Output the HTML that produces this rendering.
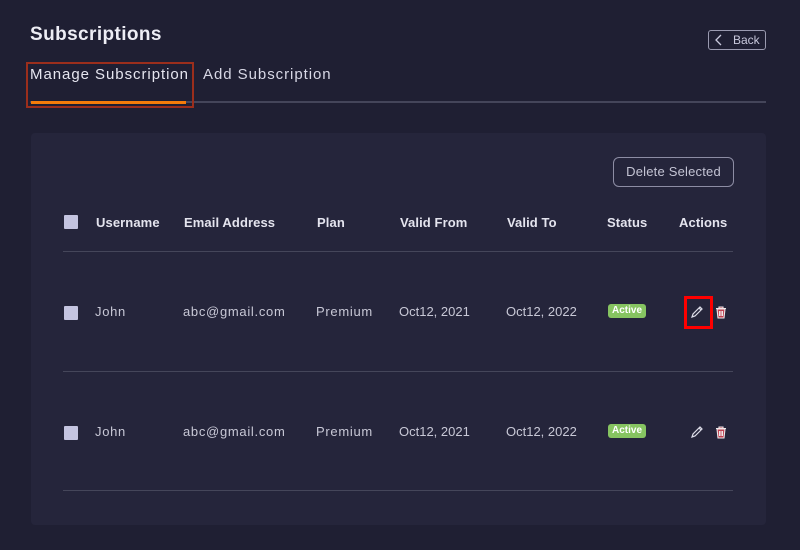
<!DOCTYPE html>
<html><head><style>
*{margin:0;padding:0;box-sizing:border-box}
body{width:800px;height:550px;background:#1f1f33;font-family:"Liberation Sans",sans-serif;position:relative;overflow:hidden;color:#d8d8e8}
.a{position:absolute;white-space:nowrap}
.h{font-size:13px;font-weight:bold;color:#e4e4ee;top:215px;letter-spacing:0.1px}
.c{font-size:13px;color:#c8c8d6;letter-spacing:0.7px}
.d{letter-spacing:0}
.cb{position:absolute;left:64px;width:14px;height:14px;background:#c4c4e0;border-radius:1px}
.line{position:absolute;left:63px;width:670px;height:1px;background:#45465a}
.badge{position:absolute;left:608px;width:38px;height:14px;background:#86c461;color:#fff;font-size:10px;font-weight:bold;border-radius:3px;text-align:center;line-height:14px}
</style></head><body>
<div class="a" style="left:30px;top:24px;font-size:19px;font-weight:bold;color:#ededf5;letter-spacing:0.4px">Subscriptions</div>
<div class="a" style="left:708px;top:30px;width:58px;height:20px;border:1px solid #9a9ab0;border-radius:3px;font-size:12px;color:#c8c8dc;line-height:18px;padding-left:24px">Back</div>
<svg class="a" style="left:714px;top:33px" width="10" height="14"><path d="M7 2 L2 7 L7 12" stroke="#c8c8dc" stroke-width="1.3" fill="none"/></svg>
<div class="a" style="left:30px;top:66px;font-size:15px;color:#e6e6f0;letter-spacing:0.95px">Manage Subscription</div>
<div class="a" style="left:203px;top:66px;font-size:15px;color:#d8d8e6;letter-spacing:0.95px">Add Subscription</div>
<div class="a" style="left:30px;top:101px;width:736px;height:2px;background:#44455a"></div>
<div class="a" style="left:31px;top:101px;width:155px;height:3px;background:#f57c0a"></div>
<div class="a" style="left:26px;top:62px;width:168px;height:46px;border:2px solid #9b2e1c"></div>
<div class="a" style="left:31px;top:133px;width:735px;height:392px;background:#25253b;border-radius:4px"></div>
<div class="a" style="left:613px;top:157px;width:121px;height:30px;border:1.5px solid #8d8da4;border-radius:6px;font-size:13px;color:#c4c4d4;text-align:center;line-height:27px;letter-spacing:0.2px">Delete Selected</div>
<div class="cb" style="top:215px"></div>
<div class="a h" style="left:96px">Username</div>
<div class="a h" style="left:184px">Email Address</div>
<div class="a h" style="left:317px">Plan</div>
<div class="a h" style="left:400px">Valid From</div>
<div class="a h" style="left:507px">Valid To</div>
<div class="a h" style="left:607px">Status</div>
<div class="a h" style="left:679px">Actions</div>
<div class="line" style="top:251px"></div>
<div class="line" style="top:371px"></div>
<div class="line" style="top:490px"></div>

<div class="cb" style="top:306px"></div>
<div class="a c" style="left:95px;top:304px">John</div>
<div class="a c" style="left:183px;top:304px">abc@gmail.com</div>
<div class="a c" style="left:316px;top:304px">Premium</div>
<div class="a c d" style="left:399px;top:304px">Oct12, 2021</div>
<div class="a c d" style="left:506px;top:304px">Oct12, 2022</div>
<div class="badge" style="top:304px">Active</div>
<div class="a" style="left:684px;top:296px;width:29px;height:33px;border:3px solid #f00"></div>

<div class="cb" style="top:426px"></div>
<div class="a c" style="left:95px;top:424px">John</div>
<div class="a c" style="left:183px;top:424px">abc@gmail.com</div>
<div class="a c" style="left:316px;top:424px">Premium</div>
<div class="a c d" style="left:399px;top:424px">Oct12, 2021</div>
<div class="a c d" style="left:506px;top:424px">Oct12, 2022</div>
<div class="badge" style="top:424px">Active</div>

<svg class="a" style="left:690px;top:305px" width="14" height="14"><path d="M2 12 L3 9 L10 2 L12 4 L5 11 Z M9 3 L11 5" stroke="#dcdce8" stroke-width="1.2" fill="none"/></svg>
<svg class="a" style="left:714px;top:305px" width="14" height="14"><path d="M2 3.5 H12 M5 3.5 V2 H9 V3.5 M3 4 L4 13 H10 L11 4 Z M5.5 6 V11 M7 6 V11 M8.5 6 V11" stroke="#f0e8ea" stroke-width="1.1" fill="#c04050"/></svg>
<svg class="a" style="left:690px;top:425px" width="14" height="14"><path d="M2 12 L3 9 L10 2 L12 4 L5 11 Z M9 3 L11 5" stroke="#dcdce8" stroke-width="1.2" fill="none"/></svg>
<svg class="a" style="left:714px;top:425px" width="14" height="14"><path d="M2 3.5 H12 M5 3.5 V2 H9 V3.5 M3 4 L4 13 H10 L11 4 Z M5.5 6 V11 M7 6 V11 M8.5 6 V11" stroke="#f0e8ea" stroke-width="1.1" fill="#c04050"/></svg>
</body></html>
